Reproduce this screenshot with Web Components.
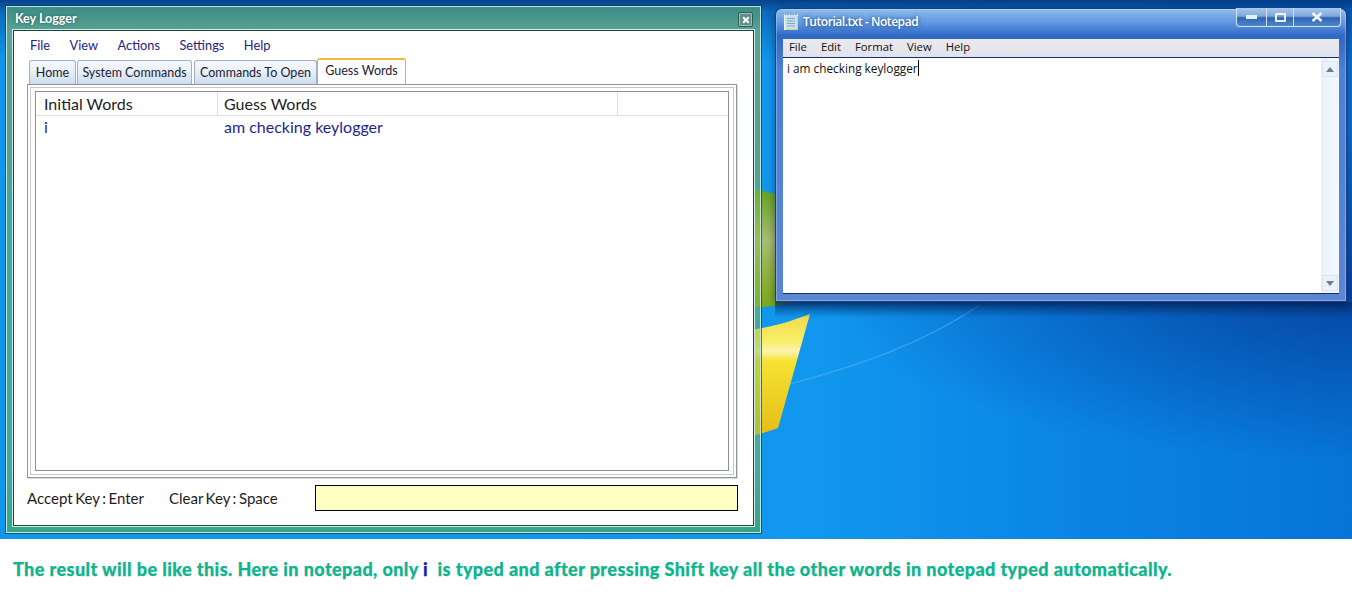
<!DOCTYPE html>
<html lang="en">
<head>
<meta charset="utf-8">
<title>Key Logger</title>
<style>
  html, body { margin: 0; background: #fff; }
  body { width: 1352px; height: 616px; overflow: hidden; font-family: "Lato", sans-serif; }
</style>
</head>
<body>
<desk-top>
  <logger-window slot="windows"></logger-window>
  <notepad-window slot="windows"></notepad-window>
</desk-top>
<result-caption>The result will be like this. Here in notepad, only <b>i</b>&nbsp; is typed and after pressing Shift key all the other words in notepad typed automatically.</result-caption>

<script>
class DeskTop extends HTMLElement {
  constructor() {
    super();
    this.attachShadow({ mode: 'open' }).innerHTML = `
      <style>
        :host { display: block; position: relative; height: 539px; overflow: hidden;
          background:
            linear-gradient(180deg, rgba(5,50,120,.85) 0, rgba(8,70,150,.55) 12px, rgba(10,110,200,0) 60px),
            radial-gradient(ellipse 520px 170px at 1352px 290px, rgba(6,50,140,.7), rgba(6,50,140,0)),
            linear-gradient(90deg, #0f97ec 0, #1198ee 800px, #0a86e6 1050px, #0674d6 1352px); }
        svg { position: absolute; left: 0; top: 0; }
      </style>
      <svg width="1352" height="539" viewBox="0 0 1352 539">
        <defs>
          <linearGradient id="g" x1="0" x2="0" y1="0" y2="1">
            <stop offset="0" stop-color="#5f9e1e"/><stop offset=".45" stop-color="#a9bd74"/><stop offset=".75" stop-color="#8fb03c"/><stop offset="1" stop-color="#7aa91c"/>
          </linearGradient>
          <linearGradient id="y" x1="0" x2="0" y1="0" y2="1">
            <stop offset="0" stop-color="#f4d94a"/><stop offset=".22" stop-color="#f7ee68"/><stop offset=".3" stop-color="#fbf3b0"/><stop offset=".38" stop-color="#f5e232"/><stop offset="1" stop-color="#e6bb16"/>
          </linearGradient>
          <linearGradient id="s" x1="0" x2="0" y1="0" y2="1">
            <stop offset="0" stop-color="#032a66" stop-opacity=".7"/><stop offset="1" stop-color="#032a66" stop-opacity="0"/>
          </linearGradient>
        </defs>
        <path d="M740 186 C755 190 775 192 795 200 L795 302 C780 306 760 308 740 308 Z" fill="url(#g)"/>
        <path d="M740 331 C765 329 790 322 810 314 L778 428 C765 433 750 437 740 438 Z" fill="url(#y)"/>
        <path d="M790 384 C860 365 920 345 980 305" fill="none" stroke="#5db8f2" stroke-opacity=".55" stroke-width="1.2"/>
        <rect x="775" y="302" width="577" height="16" fill="url(#s)"/>
      </svg>
      <slot name="windows"></slot>
    `;
  }
}

class LoggerWindow extends HTMLElement {
  constructor() {
    super();
    this.attachShadow({ mode: 'open' }).innerHTML = `
      <style>
        :host { position: absolute; left: 6px; top: 6px; width: 755px; height: 527px; box-sizing: border-box;
          display: flex; flex-direction: column; padding: 0 6px 6px;
          border: 1px solid #c9e6dc; outline: 1px solid rgba(10,50,60,.65);
          background: linear-gradient(180deg, #3c8c86 0, #5aa294 24px, #55a08e 160px, rgba(124,191,69,.45) 186px, rgba(124,191,69,.45) 470px, #35a58a 100%);
          font-family: "Lato", sans-serif; color: #111; }
        .title { height: 23px; display: flex; align-items: center; justify-content: space-between; padding-left: 2px; }
        .title span { color: #fff; font-size: 12.5px; font-weight: 700; text-shadow: 0 0 3px rgba(0,40,40,.6); }
        .close { width: 15px; height: 15px; margin: 2px 1px 0 0; box-sizing: border-box; border: 1px solid #2f5d58;
          box-shadow: inset 0 0 0 1px #9cc4ba; border-radius: 2px; background: #5f8f88; display: flex; align-items: center; justify-content: center; }
        .body { flex: 1; min-height: 0; box-sizing: border-box; background: #fff; border: 1px solid #14483f;
          outline: 1px solid #d4ece4; padding: 4px 15px 0 13px; display: flex; flex-direction: column; }
        .foot { height: 48px; display: flex; align-items: center; font-size: 15px; padding-bottom: 7px; box-sizing: border-box; color: #1c1c1c; white-space: nowrap; word-spacing: -1.3px; }
        .accept { flex: none; width: 142px; }
        .clear { flex: none; width: 146px; }
        input { flex: none; width: 423px; height: 26px; box-sizing: border-box; border: 1px solid #000; background: #ffffc4; padding: 0; margin: 0; }
      </style>
      <div class="title">
        <span>Key Logger</span>
        <div class="close"><svg width="8" height="8" viewBox="0 0 8 8"><path d="M1.2 1.2 L6.8 6.8 M6.8 1.2 L1.2 6.8" stroke="#fff" stroke-width="2"/></svg></div>
      </div>
      <div class="body">
        <menu-bar items="File,View,Actions,Settings,Help"></menu-bar>
        <tab-strip></tab-strip>
        <words-table></words-table>
        <div class="foot"><span class="accept">Accept Key : Enter</span><span class="clear">Clear Key : Space</span><input type="text" aria-label="Guess"></div>
      </div>
    `;
  }
}

class MenuBar extends HTMLElement {
  constructor() {
    super();
    const items = this.getAttribute('items').split(',');
    this.attachShadow({ mode: 'open' }).innerHTML = `
      <style>
        :host { display: flex; height: 20px; flex: none; padding-left: 3px; gap: 19.5px; align-items: center;
          font-size: 12.8px; color: #23237f; }
      </style>
      ${items.map(i => `<span>${i}</span>`).join('')}
    `;
  }
}

class TabStrip extends HTMLElement {
  constructor() {
    super();
    const tabs = [['Home', 47, 1], ['System Commands', 115, 2], ['Commands To Open', 123, 0]];
    this.attachShadow({ mode: 'open' }).innerHTML = `
      <style>
        :host { display: flex; flex: none; height: 27px; margin-top: 3px; align-items: flex-end; padding-left: 2px; font-size: 12.5px; color: #1c2033; white-space: nowrap; }
        .tab { height: 25px; box-sizing: border-box; border: 1px solid #9fb0c4; border-bottom: 0; border-radius: 3px 3px 0 0;
          background: linear-gradient(180deg, #f6f9fc 0, #e8eff7 45%, #c8daee 100%); padding-bottom: 2px;
          display: flex; align-items: center; justify-content: center; flex: none; }
        .on { height: 27px; width: 89px; flex: none; box-sizing: border-box; background: #fff; border: 1px solid #aab4bf; border-top: 2px solid #f0b93c;
          border-bottom: 0; border-radius: 3px 3px 0 0; display: flex; align-items: flex-start; justify-content: center; padding-top: 3px; }
      </style>
      ${tabs.map(([t, w, m]) => `<div class="tab" style="width:${w}px;margin-right:${m}px">${t}</div>`).join('')}
      <div class="on">Guess Words</div>
    `;
  }
}

class WordsTable extends HTMLElement {
  constructor() {
    super();
    this.attachShadow({ mode: 'open' }).innerHTML = `
      <style>
        :host { display: block; width: 710px; height: 394px; box-sizing: border-box; flex: none;
          border: 1px solid #8f9499; padding: 2px; margin-top: -1px; box-shadow: 1px 1px 0 #d8dadd; }
        .frame2 { height: 100%; box-sizing: border-box; border: 1px solid #c3c6ca; padding: 3px 4px; }
        .grid { height: 100%; box-sizing: border-box; border: 1px solid #8d9196; font-size: 16px; }
        .row { display: grid; grid-template-columns: 182px 400px 1fr; }
        .head { height: 24px; border-bottom: 1px solid #e2e2e2; color: #1d1d1d; box-sizing: border-box; align-items: center; }
        .head div { height: 23px; line-height: 24px; padding-left: 8px; border-right: 1px solid #dcdcdc; box-sizing: border-box; }
        .head div + div { padding-left: 6px; }
        .head div:last-child { border: 0; }
        .data { color: #1f1f8f; height: 20px; align-items: center; }
        .data div { padding-left: 8px; }
        .data div + div { padding-left: 6px; }
      </style>
      <div class="frame2"><div class="grid">
        <div class="row head"><div>Initial Words</div><div>Guess Words</div><div></div></div>
        <div class="row data"><div>i</div><div>am checking keylogger</div></div>
      </div></div>
    `;
  }
}

class NotepadWindow extends HTMLElement {
  constructor() {
    super();
    this.attachShadow({ mode: 'open' }).innerHTML = `
      <style>
        :host { position: absolute; left: 775px; top: 8px; width: 572px; height: 294px; box-sizing: border-box;
          border: 1px solid #1d3f80; border-radius: 7px 7px 0 0; padding: 0 7px 7px; display: flex; flex-direction: column;
          background: linear-gradient(180deg, #8dbdee 0, #5f97e0 14px, #2f68c4 27px, #4c7fd6 60px, #5b86d4 100%);
          box-shadow: 0 2px 8px rgba(0,20,60,.5), inset 0 0 0 1px rgba(255,255,255,.28);
          font-family: "Open Sans", sans-serif; color: #111; }
        .title { height: 30px; flex: none; display: flex; align-items: flex-start; position: relative; }
        .title svg.doc { margin: 5px 5px 0 1px; }
        .title span { color: #fff; font-size: 12px; font-weight: 600; line-height: 25px; letter-spacing: -.45px; text-shadow: 0 0 4px #16407e; }
        .btns { position: absolute; right: -2px; top: -1px; height: 19px; display: grid; grid-template-columns: 29px 27px 47px;
          box-sizing: border-box; border: 1px solid #d0e2f5; border-top: 0; border-radius: 0 0 4px 4px;
          background: linear-gradient(180deg, #a8c8ec 0, #7ea8dc 45%, #2f64b4 55%, #4f88cc 100%); }
        .btns div { display: flex; align-items: center; justify-content: center; }
        .btns div + div { border-left: 1px solid #cfe0f3; }
        .menu { height: 19px; flex: none; box-sizing: border-box; background: linear-gradient(180deg, #e9e9ef, #e2e2ea); border-bottom: 1px solid #14307a;
          display: flex; gap: 14px; align-items: center; padding: 0 0 3px 6px; font-size: 11.3px; }
        .edit { flex: 1; min-height: 0; display: flex; background: #fff; border-bottom: 1px solid #14307a; }
        .text { flex: 1; font-size: 11.8px; line-height: 20px; padding-left: 4px; }
        .text i { display: inline-block; width: 1px; height: 16px; background: #000; vertical-align: -3px; }
        .scroll { width: 18px; background: linear-gradient(90deg, #e8f1fb, #f5f9fd); display: flex; flex-direction: column; justify-content: space-between; padding: 3px 0 2px; box-sizing: border-box; }
        .scroll div { height: 16px; margin: 0 1px; background: #eaf2fb; border: 1px solid #d8e4f0; box-sizing: border-box; display: flex; align-items: center; justify-content: center; }
      </style>
      <div class="title">
        <svg class="doc" width="14" height="16" viewBox="0 0 14 16">
          <rect x=".5" y="1" width="13" height="14.5" fill="#c8e2ee" stroke="#eef6f8"/>
          <path d="M3 4.5H11M3 7H11M3 9.5H11M3 12H11" stroke="#7fa8c8"/>
          <path d="M1 .5H13" stroke="#7aa0c0" stroke-width="1.4" stroke-dasharray="1.5 1"/>
          <path d="M13.5 2V15.5H2" fill="none" stroke="#e8c48a"/>
        </svg>
        <span>Tutorial.txt - Notepad</span>
        <div class="btns">
          <div><svg width="12" height="5" viewBox="0 0 12 5"><rect width="11" height="4" fill="#e8eef6"/></svg></div>
          <div><svg width="11" height="9" viewBox="0 0 11 9"><rect x="1" y="1" width="9" height="7" fill="none" stroke="#f0f4fa" stroke-width="2"/></svg></div>
          <div><svg width="12" height="10" viewBox="0 0 12 10"><path d="M1.5 1 L10.5 9 M10.5 1 L1.5 9" stroke="#f2f5fa" stroke-width="2.6"/></svg></div>
        </div>
      </div>
      <div class="menu"><span>File</span><span>Edit</span><span>Format</span><span>View</span><span>Help</span></div>
      <div class="edit">
        <div class="text">i am checking keylogger<i></i></div>
        <div class="scroll">
          <div><svg width="8" height="5" viewBox="0 0 8 5"><path d="M4 0 L8 5 H0 Z" fill="#6e7e8e"/></svg></div>
          <div><svg width="8" height="5" viewBox="0 0 8 5"><path d="M0 0 H8 L4 5 Z" fill="#6e7e8e"/></svg></div>
        </div>
      </div>
    `;
  }
}

class ResultCaption extends HTMLElement {
  constructor() {
    super();
    this.attachShadow({ mode: 'open' }).innerHTML = `
      <style>
        :host { display: block; height: 77px; box-sizing: border-box; padding: 18px 0 0 13px; background: #fff;
          font: 900 18px/24px "Lato", sans-serif; color: #0fb48d; white-space: nowrap; letter-spacing: .41px; -webkit-text-stroke: .25px #0fb48d; }
        ::slotted(b) { color: #1424a8; font-weight: 900; -webkit-text-stroke: .25px #1424a8; }
      </style>
      <slot></slot>
    `;
  }
}

customElements.define('desk-top', DeskTop);
customElements.define('logger-window', LoggerWindow);
customElements.define('menu-bar', MenuBar);
customElements.define('tab-strip', TabStrip);
customElements.define('words-table', WordsTable);
customElements.define('notepad-window', NotepadWindow);
customElements.define('result-caption', ResultCaption);
</script>
</body>
</html>
